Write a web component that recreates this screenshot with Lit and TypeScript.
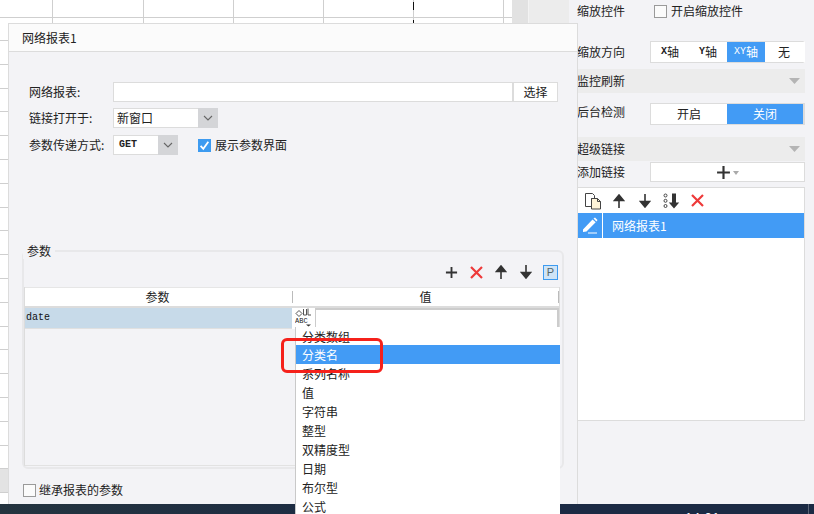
import { LitElement, html, css } from "lit";
import { customElement } from "lit/decorators.js";

const I = {
  plus: (s = 14) => html`<svg width=${s} height=${s} viewBox="0 0 14 14"><path d="M7 1v12M1 7h12" stroke="#333" stroke-width="2" fill="none"/></svg>`,
  x: () => html`<svg width="15" height="15" viewBox="0 0 15 15"><path d="M2 2l11 11M13 2L2 13" stroke="#ee3a3a" stroke-width="2.2" fill="none"/></svg>`,
  up: () => html`<svg width="12" height="14" viewBox="0 0 12 14"><path d="M6 1L1.5 6.5h9zM6 5v9" fill="#333" stroke="#333" stroke-width="1.6"/></svg>`,
  down: () => html`<svg width="12" height="14" viewBox="0 0 12 14"><path d="M6 13l4.5-5.5h-9zM6 9V0" fill="#333" stroke="#333" stroke-width="1.6"/></svg>`,
  chev: () => html`<svg width="10" height="6" viewBox="0 0 10 6"><path d="M1 1l4 4 4-4" stroke="#666" stroke-width="1.1" fill="none"/></svg>`,
  check: () => html`<svg width="13" height="13" viewBox="0 0 13 13"><rect width="13" height="13" fill="#3d9bf0"/><path d="M2.6 6.8l2.7 3 5-7" stroke="#fff" stroke-width="1.8" fill="none"/></svg>`,
  paste: () => html`<svg width="18" height="18" viewBox="0 0 18 18"><path d="M1.5 1.5h7l2 2v3h-3v8h-6z" fill="#fff" stroke="#444"/><path d="M7.5 6.500h6l3 3v7.500h-9z" fill="#fdf3d8" stroke="#444"/><path d="M13.500 6.500v3h3" fill="none" stroke="#444"/></svg>`,
  dotsDown: () => html`<svg width="18" height="16" viewBox="0 0 18 16"><g fill="#fff" stroke="#444"><circle cx="2.500" cy="2.500" r="1.500"/><circle cx="2.500" cy="7.800" r="1.500"/><circle cx="2.500" cy="13" r="1.500"/></g><path d="M11 15.500L5.800 9.500H9V.5h4v9h3.200z" fill="#333"/></svg>`,
  pencil: () => html`<svg width="16" height="17" viewBox="0 0 16 17"><path d="M1 12.500L10.500 2.500l3.200 2.800L4.500 14.500 1 15z M11.500 1.500l1.500-1 2.500 2.500-1 1.500z" fill="#fff"/><path d="M6 16h9" stroke="#fff"/></svg>`,
  abc: () => html`<svg width="18" height="19" viewBox="0 0 18 19"><path d="M1 5.500l3-3 3 3-3 3zM8.500 1v6h3V1M13 .5V7h3" fill="none" stroke="#555"/><text x="0" y="15" class="abc">ABC</text><path d="M11 16.500h5l-2.500 2z" fill="#333"/></svg>`,
  tri: () => html`<svg width="11" height="6" viewBox="0 0 11 6"><path d="M0 0h11L5.500 6z" fill="#b4b4b4"/></svg>`,
};

@customElement("app-root")
export class AppRoot extends LitElement {
  static styles = css`
    :host {
      display: block; width: 814px; height: 514px; overflow: hidden; position: relative;
      font: 12px/16px "Noto Sans CJK SC", "Liberation Sans", sans-serif; color: #222; background: #f3f3f6;
    }
    .mono { font-family: "Liberation Mono", "Noto Sans CJK SC", monospace; font-size: 10px; font-weight: 700; font-style: normal; }
    .reg { font-weight: 400; color: #111; }
    .main { display: flex; height: 504px; overflow: hidden; }
    .sheet { width: 512px; flex: none; background: #fff; display: grid; grid-template-rows: 18px 23px repeat(20, 23.8px); position: relative; }
    .row { display: grid; grid-template-columns: 53px 91px 90px 90px 90px 90px 8px; border-bottom: 1px solid #cfcfcf; box-sizing: border-box; }
    .row.hit { background: #e3e3e3; }
    .row div { border-right: 1px solid #cfcfcf; }
    .pagebreak { position: absolute; left: 413px; top: 2px; width: 1px; height: 21px;
      background: repeating-linear-gradient(#111 0 8px, transparent 8px 18px); }
    .hd1 { width: 16px; height: 23px; background: #e2e2e2; border-right: 1px solid #f3f3f3; flex: none; }
    .hd2 { width: 40px; height: 23px; background: #ececec; flex: none; }
    .panel { flex: 1; padding: 0 10px 0 8px; display: flex; flex-direction: column; }
    .line { display: flex; align-items: center; flex: none; }
    .lab { width: 73px; flex: none; white-space: nowrap; }
    .lab.wide { width: 77px; }
    .l1 { height: 22px; }
    .l2 { height: 22px; margin-top: 19px; }
    .l3 { height: 22px; margin-top: 10px; }
    .l3 .lab { padding-bottom: 4px; }
    .l4 { height: 20px; margin-top: 1px; }
    .box { width: 13px; height: 13px; border: 1px solid #9a9a9a; box-sizing: border-box; background: #fbfbfb; flex: none; }
    .boxlab { margin-left: 4px; }
    .seg { display: flex; flex: none; width: 155px; height: 22px; box-sizing: border-box; border: 1px solid #dcdcdc; border-width: 1px 2px 1px 1px; background: #fff; }
    .seg span { flex: 1; display: flex; align-items: center; justify-content: center; }
    .seg.three { border-right-color: #fff; }
    .seg .on { background: #429bf5; color: #fff; }
    .seg .on .mono { color: #fff; font-weight: 400; }
    .ghead { height: 24px; background: #ececec; display: flex; align-items: center; justify-content: space-between; padding-right: 5px; flex: none; }
    .g1 { margin-top: 6px; }
    .g2 { margin-top: 12px; }
    .add { flex: none; width: 155px; height: 20px; box-sizing: border-box; border: 1px solid #dcdcdc; background: #fff; display: flex; align-items: center; justify-content: center; gap: 2px; }
    .add i { width: 0; height: 0; border: 3.500px solid transparent; border-top: 4px solid #aaa; border-bottom: 0; margin-top: 2px; }
    .lst { margin-top: 5px; height: 234px; box-sizing: border-box; border: 1px solid #dcdcdc; background: #fff; flex: none; }
    .ltool { height: 25px; display: flex; align-items: center; padding-left: 6px; }
    .m11 { margin-left: 11px; display: flex; }
    .m14 { margin-left: 14px; display: flex; }
    .m12 { margin-left: 12px; display: flex; }
    .m9 { margin-left: 9px; display: flex; }
    .lrow { height: 25px; background: #429bf5; color: #fff; display: flex; align-items: center; }
    .lrow .pen { width: 24px; display: flex; justify-content: center; border-right: 1px solid #fff; height: 100%; align-items: center; flex: none; }
    .lrow .t { padding-left: 9px; }

    .task { height: 10px; background: linear-gradient(90deg, #24343f, #1b2a44 50%, #1b2a44); position: relative; overflow: hidden; display: flex; justify-content: flex-end; }
    .clock { color: #fff; font: 13px/16px "Liberation Sans", sans-serif; padding: 6px 94px 0 0; letter-spacing: 0.500px; }
    .tline { position: absolute; left: 808px; top: 0; bottom: 0; width: 1px; background: #5a6577; }

    .dialog { position: absolute; left: 8px; top: 23px; width: 570px; height: 481px; box-sizing: border-box; border: 1px solid #dcdcdc; border-bottom: 0; background: #f3f3f6; display: flex; flex-direction: column; }
    .title { height: 28px; flex: none; box-sizing: border-box; background: #fbfbfb; border-bottom: 1px solid #dcdcdc; padding-left: 13px; display: flex; align-items: center; }
    .form { padding: 30px 0 0 20px; display: flex; flex-direction: column; }
    .field { display: flex; align-items: center; }
    .f2 { margin-top: 6px; }
    .f3 { margin-top: 7px; }
    .field .flab { width: 84px; flex: none; white-space: nowrap; }
    .input { width: 400px; height: 20px; box-sizing: border-box; border: 1px solid #dcdcdc; background: #fff; }
    .btn { width: 45px; height: 20px; box-sizing: border-box; border: 1px solid #dcdcdc; background: #fff; display: flex; align-items: center; justify-content: center; }
    .sel { height: 20px; box-sizing: border-box; border: 1px solid #dcdcdc; background: #fff; display: flex; align-items: center; justify-content: space-between; padding-left: 3px; }
    .sel b { width: 20px; height: 20px; margin: -1px -1px -1px 0; background: #d4d5d8; display: flex; align-items: center; justify-content: center; font-weight: 400; flex: none; }
    .sel.w1 { width: 105px; }
    .sel.w2 { width: 65px; padding-left: 5px; }
    .chk { display: flex; align-items: center; gap: 4px; margin-left: 20px; }
    .params { position: relative; margin: 95px 0 0 13px; width: 542px; height: 219px; box-sizing: border-box; border: 2px solid #e8e8ea; border-radius: 6px; flex: none; }
    .legend { position: absolute; left: -1px; top: -9px; padding: 0 4px; background: #f3f3f6; }
    .ptool { height: 35px; display: flex; align-items: center; justify-content: flex-end; gap: 11px; padding: 5px 4px 0 0; box-sizing: border-box; }
    .dn { display: flex; margin-left: 2px; }
    .pbtn { width: 15px; height: 15px; box-sizing: border-box; border: 1px solid #3d9bf0; background: #cfe4f6; color: #566; display: flex; align-items: center; justify-content: center; font: 11px "Liberation Sans", sans-serif; }
    .tbl { width: 536px; height: 179px; box-sizing: border-box; border-left: 1px solid #dcdcdc; border-right: 1px solid #dcdcdc; border-bottom: 1px solid #e2e2e2; }
    .th { height: 18px; background: #fff; display: flex; border-bottom: 2px solid #dcdcdc; border-top: 1px solid #e6e6e6; }
    .th span { display: flex; align-items: center; justify-content: center; }
    .th .c1 { width: 267px; padding-right: 2px; box-sizing: border-box; }
    .th .c2 { flex: 1; border-left: 1px solid #bbb; margin: 3px 0; border-right: 1px solid #bbb; }
    .tr { display: flex; height: 21px; }
    .tr .k { width: 267px; background: #c7dae9; padding-left: 1px; display: flex; align-items: center; box-sizing: border-box; border-bottom: 1px solid #e0e0e0; }
    .tr .ic { width: 23px; background: #fff; box-sizing: border-box; display: flex; justify-content: center; }
    .tr .v { flex: 1; background: #fff; border: 1px solid #ccc; border-width: 2px 2px 1px 1px; box-sizing: border-box; }
    .abc { font: 400 7px "Liberation Mono", monospace; fill: #222; }
    .inherit { display: flex; align-items: center; gap: 3px; margin: 13px 0 0 14px; }

    .menu { position: absolute; left: 295px; top: 327px; width: 265px; height: 187px; box-sizing: border-box; background: #fff; border-left: 1px solid #c9c9c9; }
    .mi { height: 19px; padding-left: 6px; display: flex; align-items: center; box-sizing: border-box; }
    .mi.first { height: 18px; padding-top: 1px; }
    .mi.on { background: #429bf5; color: #fff; }
    .red { position: absolute; left: 281px; top: 338px; width: 102px; height: 35px; box-sizing: border-box; border: 3px solid #f5211b; border-radius: 6px; }
  `;

  render() {
    const rows = Array.from({ length: 22 }, (_, i) => i);
    const items = ["分类数组", "分类名", "系列名称", "值", "字符串", "整型", "双精度型", "日期", "布尔型", "公式"];
    return html`
      <div class="main">
        <div class="sheet">
          ${rows.map((i) => html`<div class="row ${i === 20 ? "hit" : ""}"><div></div><div></div><div></div><div></div><div></div><div></div></div>`)}
          <div class="pagebreak"></div>
        </div>
        <div class="hd1"></div>
        <div class="hd2"></div>
        <div class="panel">
          <div class="line l1">
            <span class="lab wide">缩放控件</span>
            <span class="box"></span><span class="boxlab">开启缩放控件</span>
          </div>
          <div class="line l2">
            <span class="lab">缩放方向</span>
            <div class="seg three">
              <span><i class="mono">X</i>轴</span>
              <span><i class="mono">Y</i>轴</span>
              <span class="on"><i class="mono">XY</i>轴</span>
              <span>无</span>
            </div>
          </div>
          <div class="ghead g1"><span>监控刷新</span>${I.tri()}</div>
          <div class="line l3">
            <span class="lab">后台检测</span>
            <div class="seg"><span>开启</span><span class="on">关闭</span></div>
          </div>
          <div class="ghead g2"><span>超级链接</span>${I.tri()}</div>
          <div class="line l4">
            <span class="lab">添加链接</span>
            <div class="add">${I.plus(15)}<i></i></div>
          </div>
          <div class="lst">
            <div class="ltool">${I.paste()}<span class="m11">${I.up()}</span><span class="m14">${I.down()}</span><span class="m12">${I.dotsDown()}</span><span class="m9">${I.x()}</span></div>
            <div class="lrow"><span class="pen">${I.pencil()}</span><span class="t">网络报表1</span></div>
          </div>
        </div>
      </div>
      <div class="task"><span class="clock">14:01</span><span class="tline"></span></div>

      <div class="dialog">
        <div class="title">网络报表1</div>
        <div class="form">
          <div class="field"><span class="flab">网络报表:</span><span class="input"></span><span class="btn">选择</span></div>
          <div class="field f2"><span class="flab">链接打开于:</span><span class="sel w1">新窗口<b>${I.chev()}</b></span></div>
          <div class="field f3"><span class="flab">参数传递方式:</span><span class="sel w2"><span class="mono">GET</span><b>${I.chev()}</b></span>
            <span class="chk">${I.check()}<span>展示参数界面</span></span></div>
        </div>
        <div class="params">
          <span class="legend">参数</span>
          <div class="ptool">${I.plus(13)}${I.x()}${I.up()}<span class="dn">${I.down()}</span><span class="pbtn">P</span></div>
          <div class="tbl">
            <div class="th"><span class="c1">参数</span><span class="c2">值</span></div>
            <div class="tr"><span class="k mono reg">date</span><span class="ic">${I.abc()}</span><span class="v"></span></div>
          </div>
        </div>
        <div class="inherit"><span class="box"></span><span>继承报表的参数</span></div>
      </div>

      <div class="menu">
        ${items.map((t, i) => html`<div class="mi ${i === 1 ? "on" : ""} ${i === 0 ? "first" : ""}">${t}</div>`)}
      </div>
      <div class="red"></div>
    `;
  }
}
